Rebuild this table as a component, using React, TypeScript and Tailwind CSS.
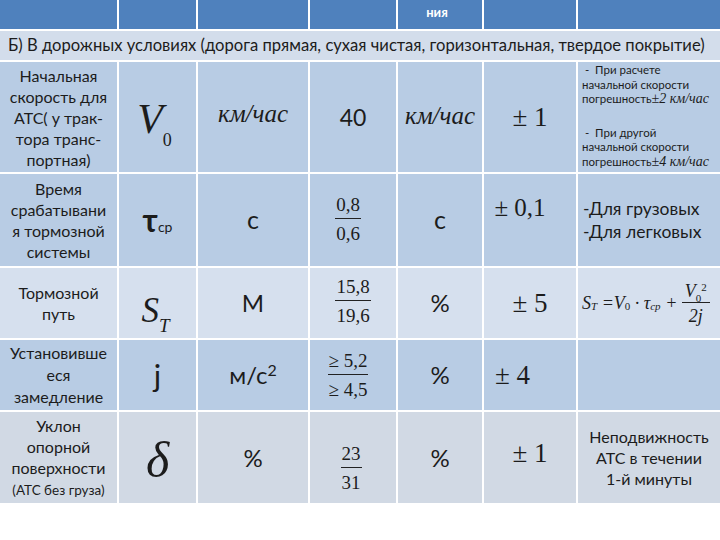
import React from 'react';

const sans = "font-['Lato','Open_Sans',sans-serif]";
const serif = "font-['Liberation_Serif','Times_New_Roman',serif]";

// Fraction: numerator over denominator with a rule between
const Frac = ({ top, bottom, className = '' }: { top: React.ReactNode; bottom: React.ReactNode; className?: string }) => (
    <span className={`inline-flex flex-col items-center leading-none ${serif} ${className}`}>
        <span className="border-b border-[#222] px-[1px] pb-[4px]">{top}</span>
        <span className="pt-[5px]">{bottom}</span>
    </span>
);

const Cell = ({ className = '', children }: { className?: string; children?: React.ReactNode }) => (
    <div className={`flex items-center justify-center text-center text-[#1c1c1c] overflow-hidden ${className}`}>
        {children}
    </div>
);

const dark = 'bg-[#b8cce4]';
const light = 'bg-[#d6e0ee]';
const grey = 'bg-[#d1d9e4]';

export default function App() {
    return (
        <div className="w-[720px] h-[540px] bg-white overflow-hidden">
            <div className="grid grid-cols-[117px_77px_110px_86px_84px_92px_142px] grid-rows-[29px_29px_110px_92px_70px_70px_91px] gap-[2px] bg-white">
                {/* Header (cut off) */}
                <Cell className="bg-[#4f81bd]" />
                <Cell className="bg-[#4f81bd]" />
                <Cell className="bg-[#4f81bd]" />
                <Cell className="bg-[#4f81bd]" />
                <Cell className="bg-[#4f81bd] items-start">
                    <span className={`${sans} text-white font-bold text-[13px] leading-none mt-[6px] mr-[6px]`}>ния</span>
                </Cell>
                <Cell className="bg-[#4f81bd]" />
                <Cell className="bg-[#4f81bd]" />

                {/* Section title */}
                <div className={`col-span-7 bg-[#d3ddeb] flex items-center pl-[8px] ${sans} text-[16.6px] text-[#1c1c1c] whitespace-nowrap`}>
                    Б) В дорожных условиях (дорога прямая, сухая чистая, горизонтальная, твердое покрытие)
                </div>

                {/* Row 1 */}
                <Cell className={`${dark} ${sans} text-[16px] leading-[21px]`}>
                    <div>Начальная<br />скорость для<br />АТС( у трак-<br />тора транс-<br />портная)</div>
                </Cell>
                <Cell className={dark}>
                    <span className={`${serif} italic text-[42px] leading-none pr-[6px] pt-[4px]`}>V<sub className="not-italic text-[18px] align-[-8px]">0</sub></span>
                </Cell>
                <Cell className={dark}>
                    <span className={`${serif} italic text-[25px] mb-[6px]`}>км/час</span>
                </Cell>
                <Cell className={dark}>
                    <span className={`${sans} text-[23px]`}>40</span>
                </Cell>
                <Cell className={dark}>
                    <span className={`${serif} italic text-[25px] mb-[2px]`}>км/час</span>
                </Cell>
                <Cell className={dark}>
                    <span className={`${serif} text-[27px]`}>± 1</span>
                </Cell>
                <div className={`${dark} ${sans} text-[11.5px] leading-[14.5px] text-[#1c1c1c] whitespace-nowrap overflow-hidden pl-[4px] pt-[1px]`}>
                    <div>&nbsp;- &nbsp;При расчете</div>
                    <div>начальной скорости</div>
                    <div>погрешность<span className={`${serif} italic text-[14px]`}>±2 км/час</span></div>
                    <div className="h-[19px]" />
                    <div>&nbsp;- &nbsp;При другой</div>
                    <div>начальной скорости</div>
                    <div>погрешность<span className={`${serif} italic text-[14px]`}>±4 км/час</span></div>
                </div>

                {/* Row 2 */}
                <Cell className={`${dark} ${sans} text-[16px] leading-[21px]`}>
                    <div>Время<br />срабатывани<br />я тормозной<br />системы</div>
                </Cell>
                <Cell className={dark}>
                    <span className={`${sans} font-bold text-[32px] leading-none`}>τ<span className="font-normal text-[14px]">ср</span></span>
                </Cell>
                <Cell className={dark}>
                    <span className={`${sans} text-[25px]`}>с</span>
                </Cell>
                <Cell className={dark}>
                    <Frac className="text-[19px] mb-[2px] mr-[10px]" top="0,8" bottom="0,6" />
                </Cell>
                <Cell className={dark}>
                    <span className={`${sans} text-[25px]`}>с</span>
                </Cell>
                <Cell className={`${dark} items-start`}>
                    <span className={`${serif} text-[25px] mt-[15px] mr-[20px]`}>± 0,1</span>
                </Cell>
                <div className={`${dark} ${sans} text-[17.5px] leading-[23px] text-[#1c1c1c] whitespace-nowrap flex flex-col justify-center pl-[5px]`}>
                    <div>-Для грузовых</div>
                    <div>-Для легковых</div>
                </div>

                {/* Row 3 */}
                <Cell className={`${light} ${sans} text-[16px] leading-[21px]`}>
                    <div>Тормозной<br />путь</div>
                </Cell>
                <Cell className={light}>
                    <span className={`${serif} italic text-[35px] leading-none mt-[14px] pr-[4px]`}>S<sub className="text-[19px] align-[-6px]">T</sub></span>
                </Cell>
                <Cell className={light}>
                    <span className={`${sans} text-[24px]`}>М</span>
                </Cell>
                <Cell className={light}>
                    <Frac className="text-[19px] mb-[4px]" top="15,8" bottom="19,6" />
                </Cell>
                <Cell className={light}>
                    <span className={`${sans} text-[24px]`}>%</span>
                </Cell>
                <Cell className={light}>
                    <span className={`${serif} text-[27px]`}>± 5</span>
                </Cell>
                <Cell className={`${light} justify-start pl-[4px]`}>
                    <span className={`${serif} italic text-[18px] whitespace-nowrap flex items-center`}>
                        S<sub className="text-[11px] align-[-3px]">T</sub>&nbsp;=V<sub className="not-italic text-[11px] align-[-3px]">0</sub>&nbsp;·&nbsp;τ<sub className="text-[11px] align-[-3px]">ср</sub>&nbsp;+&nbsp;
                        <span className="inline-flex flex-col items-center leading-none">
                            <span className="border-b border-[#222] px-[3px] pb-[2px]">V<sub className="not-italic text-[11px] align-[-3px]">0</sub><sup className="not-italic text-[11px]">2</sup></span>
                            <span className="pt-[4px]">2<span className="italic">j</span></span>
                        </span>
                    </span>
                </Cell>

                {/* Row 4 */}
                <Cell className={`${dark} ${sans} text-[16px] leading-[22px]`}>
                    <div>Установивше<br />еся<br />замедление</div>
                </Cell>
                <Cell className={dark}>
                    <span className={`${sans} text-[31px]`}>j</span>
                </Cell>
                <Cell className={dark}>
                    <span className={`${sans} text-[24px]`}>м/с<sup className="text-[16px]">2</sup></span>
                </Cell>
                <Cell className={dark}>
                    <Frac className="text-[19px] mr-[10px]" top="≥ 5,2" bottom="≥ 4,5" />
                </Cell>
                <Cell className={dark}>
                    <span className={`${sans} text-[24px]`}>%</span>
                </Cell>
                <Cell className={`${dark} justify-start pl-[11px]`}>
                    <span className={`${serif} text-[27px]`}>± 4</span>
                </Cell>
                <Cell className={dark} />

                {/* Row 5 */}
                <Cell className={`${grey} ${sans} text-[16px] leading-[21px]`}>
                    <div>Уклон<br />опорной<br />поверхности<br /><span className="text-[13.5px]">(АТС без груза)</span></div>
                </Cell>
                <Cell className={grey}>
                    <span className={`${serif} italic text-[50px] leading-none mt-[4px]`}>δ</span>
                </Cell>
                <Cell className={grey}>
                    <span className={`${sans} text-[24px]`}>%</span>
                </Cell>
                <Cell className={grey}>
                    <Frac className="text-[19px] mt-[20px] mr-[4px]" top="23" bottom="31" />
                </Cell>
                <Cell className={grey}>
                    <span className={`${sans} text-[24px]`}>%</span>
                </Cell>
                <Cell className={grey}>
                    <span className={`${serif} text-[27px] mb-[8px]`}>± 1</span>
                </Cell>
                <Cell className={`${grey} ${sans} text-[16px] leading-[21px]`}>
                    <div>Неподвижность<br />АТС в течении<br />1-й минуты</div>
                </Cell>
            </div>
        </div>
    );
}
